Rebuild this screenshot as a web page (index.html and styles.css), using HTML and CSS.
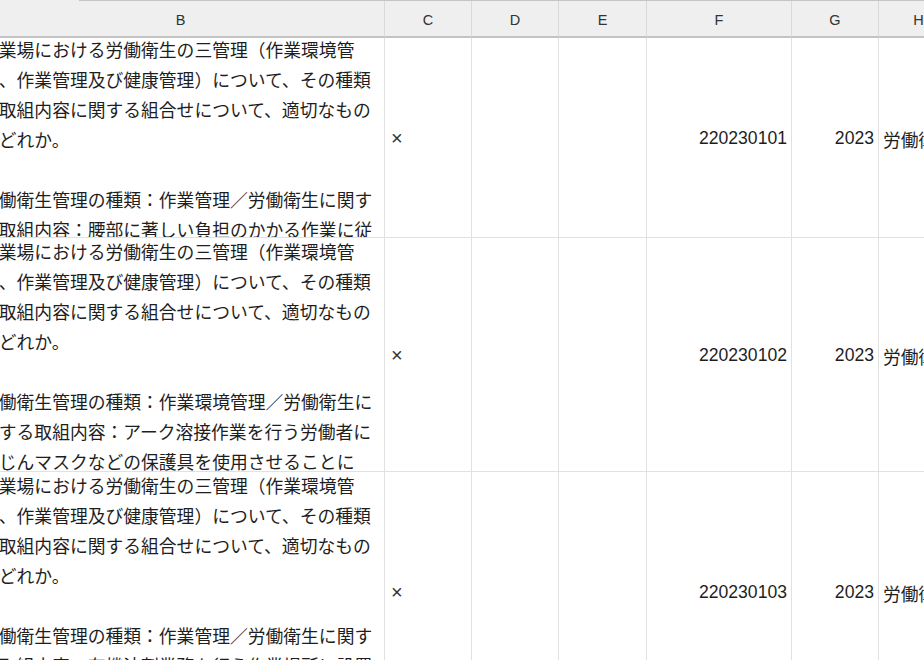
FILE: index.html
```html
<!DOCTYPE html>
<html lang="ja">
<head>
<meta charset="utf-8">
<link rel="stylesheet" href="styles.css">
</head>
<body>
<div class="viewport">
  <div class="topline"><div class="topline-gap"></div><div class="topline-bar"></div></div>
  <div class="sheet">
    <div class="hd">B</div><div class="hd">C</div><div class="hd">D</div><div class="hd">E</div><div class="hd">F</div><div class="hd">G</div><div class="hd">H</div>

    <div class="cell text"><div class="wrap first">事業場における労働衛生の三管理（作業環境管
理、作業管理及び健康管理）について、その種類
と取組内容に関する組合せについて、適切なもの
はどれか。

労働衛生管理の種類：作業管理／労働衛生に関す
る取組内容：腰部に著しい負担のかかる作業に従</div></div>
    <div class="cell mark">×</div><div class="cell"></div><div class="cell"></div>
    <div class="cell num">220230101</div><div class="cell num">2023</div><div class="cell jp">労働衛生</div>

    <div class="cell text"><div class="wrap">事業場における労働衛生の三管理（作業環境管
理、作業管理及び健康管理）について、その種類
と取組内容に関する組合せについて、適切なもの
はどれか。

労働衛生管理の種類：作業環境管理／労働衛生に
関する取組内容：アーク溶接作業を行う労働者に
粉じんマスクなどの保護具を使用させることに</div></div>
    <div class="cell mark">×</div><div class="cell"></div><div class="cell"></div>
    <div class="cell num">220230102</div><div class="cell num">2023</div><div class="cell jp">労働衛生</div>

    <div class="cell text"><div class="wrap">事業場における労働衛生の三管理（作業環境管
理、作業管理及び健康管理）について、その種類
と取組内容に関する組合せについて、適切なもの
はどれか。

労働衛生管理の種類：作業管理／労働衛生に関す
る取組内容：有機溶剤業務を行う作業場所に設置</div></div>
    <div class="cell mark">×</div><div class="cell"></div><div class="cell"></div>
    <div class="cell num">220230103</div><div class="cell num">2023</div><div class="cell jp">労働衛生</div>
  </div>
</div>
</body>
</html>
```
FILE: styles.css
```css
html, body {
  margin: 0;
  padding: 0;
  background: #ffffff;
}
body {
  width: 924px;
  height: 660px;
  overflow: hidden;
}
.viewport {
  width: 924px;
  height: 660px;
  overflow: hidden;
  background: #ffffff;
}
.topline {
  display: flex;
  height: 1px;
  background: #efefef;
}
.topline-gap {
  width: 79px;
}
.topline-bar {
  flex: 1;
  background: #c4c4c4;
}
.sheet {
  display: grid;
  grid-template-columns: 408px 87px 87px 88px 145px 87px 80px;
  grid-template-rows: 37px 200px 234px 240px;
  margin-left: -23px;
  width: 982px;
}
.hd {
  box-sizing: border-box;
  background: #efefef;
  border-bottom: 2px solid #c3c3c3;
  border-right: 1px solid #d9d9d9;
  font-family: "Liberation Sans", Arial, sans-serif;
  font-size: 14.5px;
  color: #333333;
  display: flex;
  align-items: center;
  justify-content: center;
  padding-top: 3px;
}
.cell {
  box-sizing: border-box;
  border-right: 1px solid #e1e1e1;
  border-bottom: 1px solid #e1e1e1;
  overflow: hidden;
  color: #1e1e1e;
}
.text {
  font-family: "Noto Sans CJK JP", "Noto Sans", sans-serif;
  font-size: 17.8px;
  line-height: 30px;
  padding-left: 4px;
}
.wrap {
  white-space: pre;
  margin-top: -2px;
}
.wrap.first {
  margin-top: -4px;
}
.mark {
  display: flex;
  align-items: center;
  padding-left: 6px;
  padding-top: 2px;
  font-family: "Liberation Sans", Arial, sans-serif;
  font-size: 20px;
  color: #333333;
}
.num {
  display: flex;
  align-items: center;
  justify-content: flex-end;
  padding-right: 4px;
  padding-top: 2px;
  font-family: "Liberation Sans", Arial, sans-serif;
  font-size: 17.6px;
}
.jp {
  display: flex;
  align-items: center;
  padding-left: 4px;
  padding-top: 2px;
  white-space: nowrap;
  font-family: "Noto Sans CJK JP", sans-serif;
  font-size: 17.8px;
}
```
